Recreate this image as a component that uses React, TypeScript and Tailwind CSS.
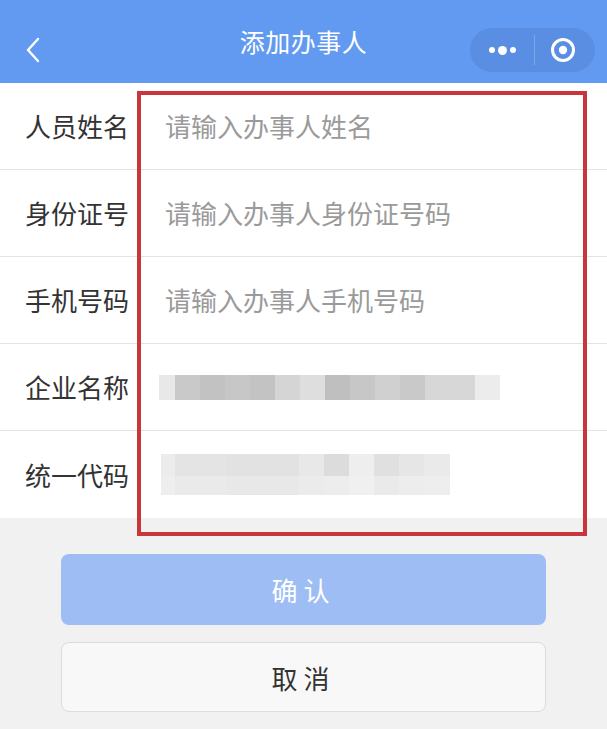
import React from 'react';

const FONT = { fontFamily: '"Noto Sans CJK SC", "Noto Sans", sans-serif' };

const fields = [
  { label: '人员姓名', placeholder: '请输入办事人姓名' },
  { label: '身份证号', placeholder: '请输入办事人身份证号码' },
  { label: '手机号码', placeholder: '请输入办事人手机号码' },
];

// mosaic blocks for the blurred company name
const companyBlocks = [
  'w-[16px] bg-[#e8e8e8]',
  'w-[25px] bg-[#c9c9c9]',
  'w-[25px] bg-[#c2c2c2]',
  'w-[25px] bg-[#c7c7c7]',
  'w-[25px] bg-[#c3c3c3]',
  'w-[25px] bg-[#d5d5d5]',
  'w-[25px] bg-[#dedede]',
  'w-[25px] bg-[#bfbfbf]',
  'w-[25px] bg-[#c7c7c7]',
  'w-[25px] bg-[#d0d0d0]',
  'w-[25px] bg-[#c9c9c9]',
  'w-[50px] bg-[#d7d7d7]',
  'w-[25px] bg-[#ececec]',
];

const codeTop = [
  'w-[14px] bg-[#ececec]',
  'w-[52px] bg-[#e4e4e4]',
  'w-[72px] bg-[#e2e2e2]',
  'w-[25px] bg-[#e8e8e8]',
  'w-[25px] bg-[#dcdcdc]',
  'w-[25px] bg-[#eeeeee]',
  'w-[25px] bg-[#e0e0e0]',
  'w-[25px] bg-[#e6e6e6]',
  'w-[26px] bg-[#eaeaea]',
];

const codeBottom = [
  'w-[14px] bg-[#eeeeee]',
  'w-[52px] bg-[#eaeaea]',
  'w-[72px] bg-[#e8e8e8]',
  'w-[25px] bg-[#ebebeb]',
  'w-[25px] bg-[#ededed]',
  'w-[25px] bg-[#f0f0f0]',
  'w-[25px] bg-[#eaeaea]',
  'w-[25px] bg-[#ededed]',
  'w-[26px] bg-[#eeeeee]',
];

const Row = ({ label, children, h }: { label: string; children: React.ReactNode; h: string }) => (
  <div className={`flex items-center ${h}`}>
    <div className="w-[165px] pl-[25px] text-[26px] text-[#333333] leading-none">{label}</div>
    <div className="flex-1 flex items-center">{children}</div>
  </div>
);

export default function App() {
  return (
    <div className="relative w-[607px] h-[729px] bg-[#f1f1f1] overflow-hidden" style={FONT}>
      {/* nav bar */}
      <div className="relative h-[83px] bg-[#629af1] flex items-center justify-center">
        <svg className="absolute left-[24px] top-[37px]" width="18" height="26" viewBox="0 0 18 26">
          <path d="M14 2 L4 13 L14 24" fill="none" stroke="#ffffff" strokeWidth="2.4" strokeLinecap="round" strokeLinejoin="round" />
        </svg>
        <div className="text-white text-[25px] leading-none tracking-[0.5px]">添加办事人</div>
        <div className="absolute left-[470px] top-[28px] w-[125px] h-[44px] rounded-full bg-[#5a8ee3] flex items-center">
          <div className="w-[64px] flex items-center justify-center gap-[3px]">
            <span className="w-[6px] h-[6px] rounded-full bg-white" />
            <span className="w-[9px] h-[9px] rounded-full bg-white" />
            <span className="w-[6px] h-[6px] rounded-full bg-white" />
          </div>
          <div className="w-px h-[30px] bg-[#7aa6ea]" />
          <div className="flex-1 flex items-center justify-center pr-[4px]">
            <svg width="26" height="26" viewBox="0 0 26 26">
              <circle cx="13" cy="13" r="10.5" fill="none" stroke="#ffffff" strokeWidth="3" />
              <circle cx="13" cy="13" r="4.2" fill="#ffffff" />
            </svg>
          </div>
        </div>
      </div>

      {/* form */}
      <div className="bg-white divide-y divide-[#e3e3e3]">
        {fields.map((f) => (
          <Row key={f.label} label={f.label} h="h-[87px]">
            <span className="text-[26px] text-[#9a9a9a] leading-none">{f.placeholder}</span>
          </Row>
        ))}
        <Row label="企业名称" h="h-[87px]">
          <div className="flex h-[25px] -ml-[6px]">
            {companyBlocks.map((c, i) => (
              <div key={i} className={`h-full ${c}`} />
            ))}
          </div>
        </Row>
        <Row label="统一代码" h="h-[87px]">
          <div className="flex flex-col -ml-[4px]">
            <div className="flex h-[22px]">
              {codeTop.map((c, i) => (
                <div key={i} className={`h-full ${c}`} />
              ))}
            </div>
            <div className="flex h-[19px]">
              {codeBottom.map((c, i) => (
                <div key={i} className={`h-full ${c}`} />
              ))}
            </div>
          </div>
        </Row>
      </div>

      {/* buttons */}
      <div className="flex flex-col items-center pt-[36px] gap-[17px]">
        <button className="w-[485px] h-[71px] rounded-[8px] bg-[#9dbdf4] text-white text-[26px] tracking-[6px] flex items-center justify-center">
          确认
        </button>
        <button className="w-[485px] h-[70px] rounded-[8px] bg-[#f8f8f8] border border-[#dcdcdc] text-[#333333] text-[26px] tracking-[6px] flex items-center justify-center">
          取消
        </button>
      </div>

      {/* red annotation box */}
      <div className="absolute left-[137px] top-[91px] w-[450px] h-[445px] border-[4px] border-[#c8353a] pointer-events-none" />
    </div>
  );
}
